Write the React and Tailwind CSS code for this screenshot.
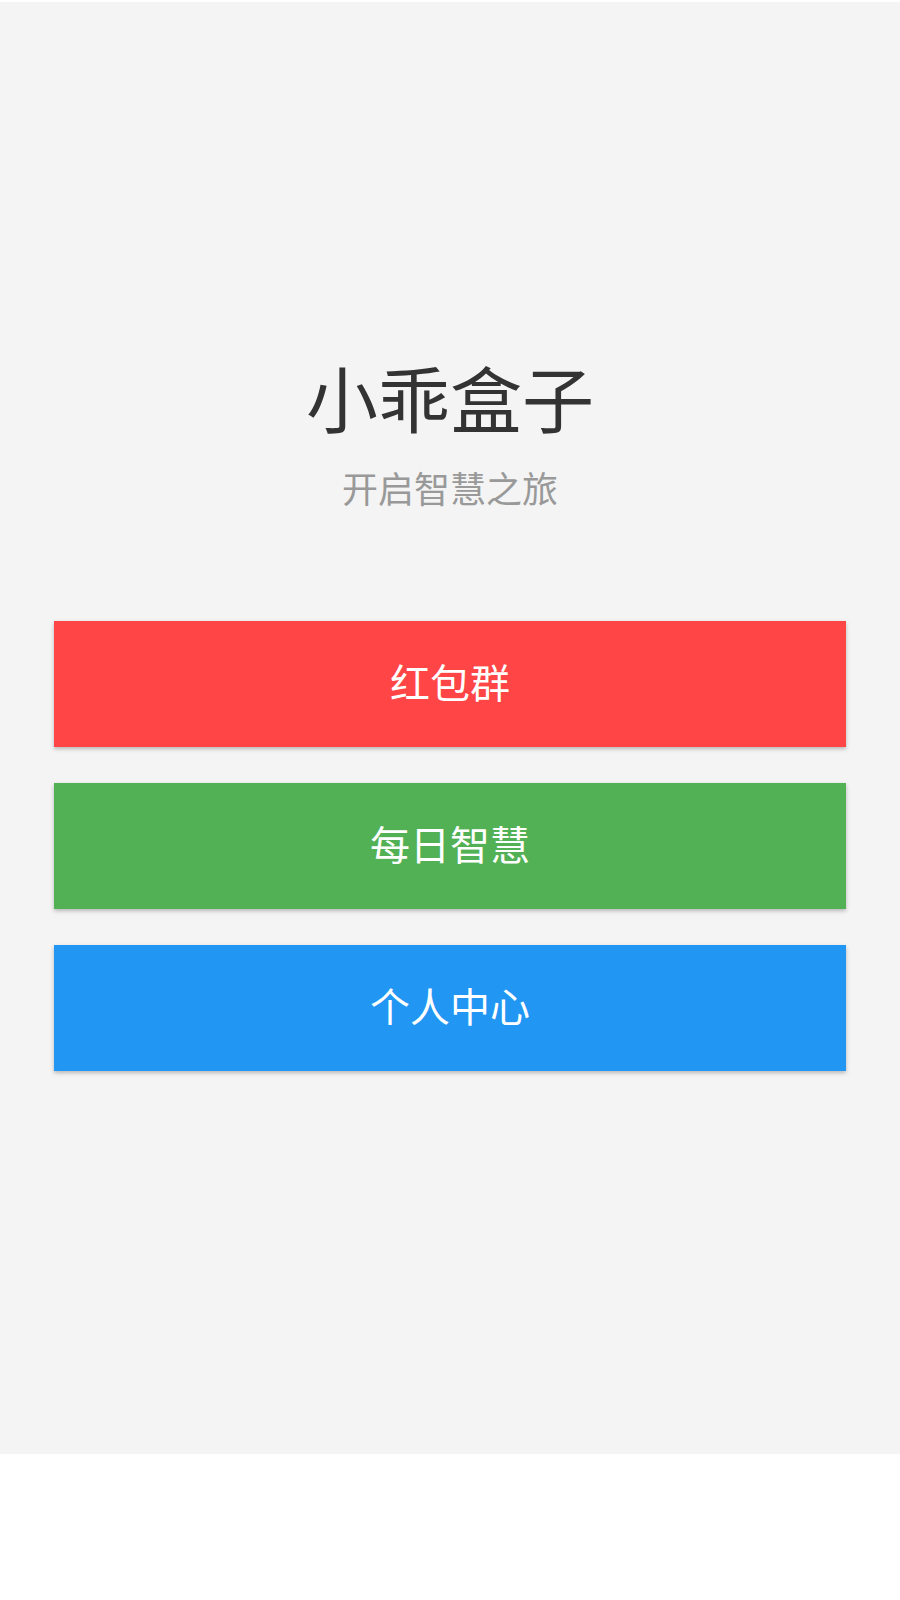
export default function App() {
  const font = { fontFamily: '"Noto Sans CJK SC", "Noto Sans", sans-serif' };
  return (
    <div className="w-[900px] bg-white pt-[2px]" style={font}>
      <div className="h-[1452px] bg-[#f4f4f4] flex flex-col items-center">
        <h1 className="mt-[350px] text-[72px] leading-[88px] font-normal text-[#333333]">小乖盒子</h1>
        <p className="mt-[25px] text-[36px] leading-[44px] font-normal text-[#999999]">开启智慧之旅</p>
        <div className="mt-[112px] w-[792px] flex flex-col gap-[36px]">
          <button className="h-[126px] w-full pb-[6px] bg-[#ff4545] text-white text-[40px] font-normal shadow-[0_2px_4px_rgba(0,0,0,0.25)]">红包群</button>
          <button className="h-[126px] w-full pb-[6px] bg-[#52b155] text-white text-[40px] font-normal shadow-[0_2px_4px_rgba(0,0,0,0.25)]">每日智慧</button>
          <button className="h-[126px] w-full pb-[6px] bg-[#2196f3] text-white text-[40px] font-normal shadow-[0_2px_4px_rgba(0,0,0,0.25)]">个人中心</button>
        </div>
      </div>
    </div>
  );
}
